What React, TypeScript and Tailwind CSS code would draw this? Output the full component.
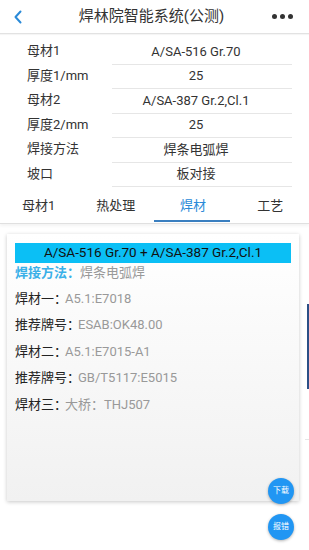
import React from "react";

const rows: [string, string][] = [
  ["母材1", "A/SA-516 Gr.70"],
  ["厚度1/mm", "25"],
  ["母材2", "A/SA-387 Gr.2,Cl.1"],
  ["厚度2/mm", "25"],
  ["焊接方法", "焊条电弧焊"],
  ["坡口", "板对接"],
];

const tabs = ["母材1", "热处理", "焊材", "工艺"];

const items: [string, string][] = [
  ["焊材一：", "A5.1:E7018"],
  ["推荐牌号：", "ESAB:OK48.00"],
  ["焊材二：", "A5.1:E7015-A1"],
  ["推荐牌号：", "GB/T5117:E5015"],
  ["焊材三：", "大桥：THJ507"],
];

export default function App() {
  return (
    <div
      className="relative w-[309px] h-[550px] overflow-hidden bg-white text-[#222]"
      style={{ fontFamily: "Roboto, 'Noto Sans CJK SC', sans-serif" }}
    >
      {/* Header */}
      <div className="flex h-[34px] items-center border-b border-[#e2e2e2] shadow-[0_1px_1px_rgba(0,0,0,0.04)]">
        <div className="w-[34px] flex justify-center pl-[2px]">
          <svg width="10" height="14" viewBox="0 0 10 14">
            <path d="M7.5 1.5 L2.5 7 L7.5 12.5" fill="none" stroke="#2a8ad8" strokeWidth="2" strokeLinecap="round" strokeLinejoin="round" />
          </svg>
        </div>
        <div className="flex-1 text-center text-[15px] text-[#333] pl-[10px]">焊林院智能系统(公测)</div>
        <div className="w-[50px] flex justify-center gap-[3px] pr-[4px]">
          <span className="w-[5px] h-[5px] rounded-full bg-[#333]" />
          <span className="w-[5px] h-[5px] rounded-full bg-[#333]" />
          <span className="w-[5px] h-[5px] rounded-full bg-[#333]" />
        </div>
      </div>

      {/* Info table */}
      <div className="pt-[6px] pb-[1px]">
        {rows.map(([k, v]) => (
          <div key={k} className="flex h-[24.5px] items-center text-[13px] text-[#333]">
            <div className="w-[112px] pl-[27px] -mt-[3px]">{k}</div>
            <div className="w-[180px] h-full flex items-center justify-center pr-[12px] border-b border-[#e6e6e6]">
              <span className="-mt-[1px]">{v}</span>
            </div>
          </div>
        ))}
      </div>

      {/* Tabs */}
      <div className="flex h-[36px] border-b border-[#e0e0e0] shadow-[0_2px_3px_rgba(0,0,0,0.05)]">
        {tabs.map((t, i) => (
          <div key={t} className="flex-1 relative flex items-center justify-center">
            <span className={`text-[13px] ${i === 2 ? "text-[#2a8ad8]" : "text-[#333]"}`}>{t}</span>
            {i === 2 && (
              <div className="absolute bottom-[1px] left-[-1px] right-[2px] h-[2px] bg-[#3a7fc0]" />
            )}
          </div>
        ))}
      </div>

      {/* Content area */}
      <div className="flex pt-[10px]">
        <div className="ml-[7px] w-[292px] h-[267px] bg-gradient-to-b from-white to-[#f1f1f1] shadow-[0_1px_4px_rgba(0,0,0,0.22)] pt-[9px] px-[8px]">
          <div className="h-[20px] bg-[#0bbff5] flex items-center justify-center text-[13.5px] text-[#111] leading-none">
            A/SA-516 Gr.70 + A/SA-387 Gr.2,Cl.1
          </div>
          <div className="mt-[2px] h-[16px] flex items-center text-[13px]">
            <span className="text-[#3ab0e8] font-bold">焊接方法：</span>
            <span className="text-[#999]">焊条电弧焊</span>
          </div>
          <div className="flex flex-col pt-[4px]">
            {items.map(([k, v], i) => (
              <div key={i} className="h-[26.5px] flex items-center text-[13px]">
                <span className="text-[#222]">{k}</span>
                <span className="text-[#999] -ml-[2px]">{v}</span>
              </div>
            ))}
          </div>
        </div>
        <div className="flex-1 flex flex-col items-end">
          <div className="mt-[70px] w-[2px] h-[85px] bg-[#2b4f86]" />
          <div className="mt-[50px] w-[4px] h-[1px] bg-[#e6e6e6]" />
        </div>
      </div>

      {/* FABs */}
      <div className="absolute left-[268px] top-[478px] w-[26px] h-[26px] rounded-full bg-[#2196f3] shadow-[0_1px_3px_rgba(0,0,0,0.3)] flex items-center justify-center text-white text-[8px]">
        下载
      </div>
      <div className="absolute left-[268px] top-[514px] w-[26px] h-[26px] rounded-full bg-[#2196f3] shadow-[0_1px_3px_rgba(0,0,0,0.3)] flex items-center justify-center text-white text-[8px]">
        报错
      </div>
    </div>
  );
}
